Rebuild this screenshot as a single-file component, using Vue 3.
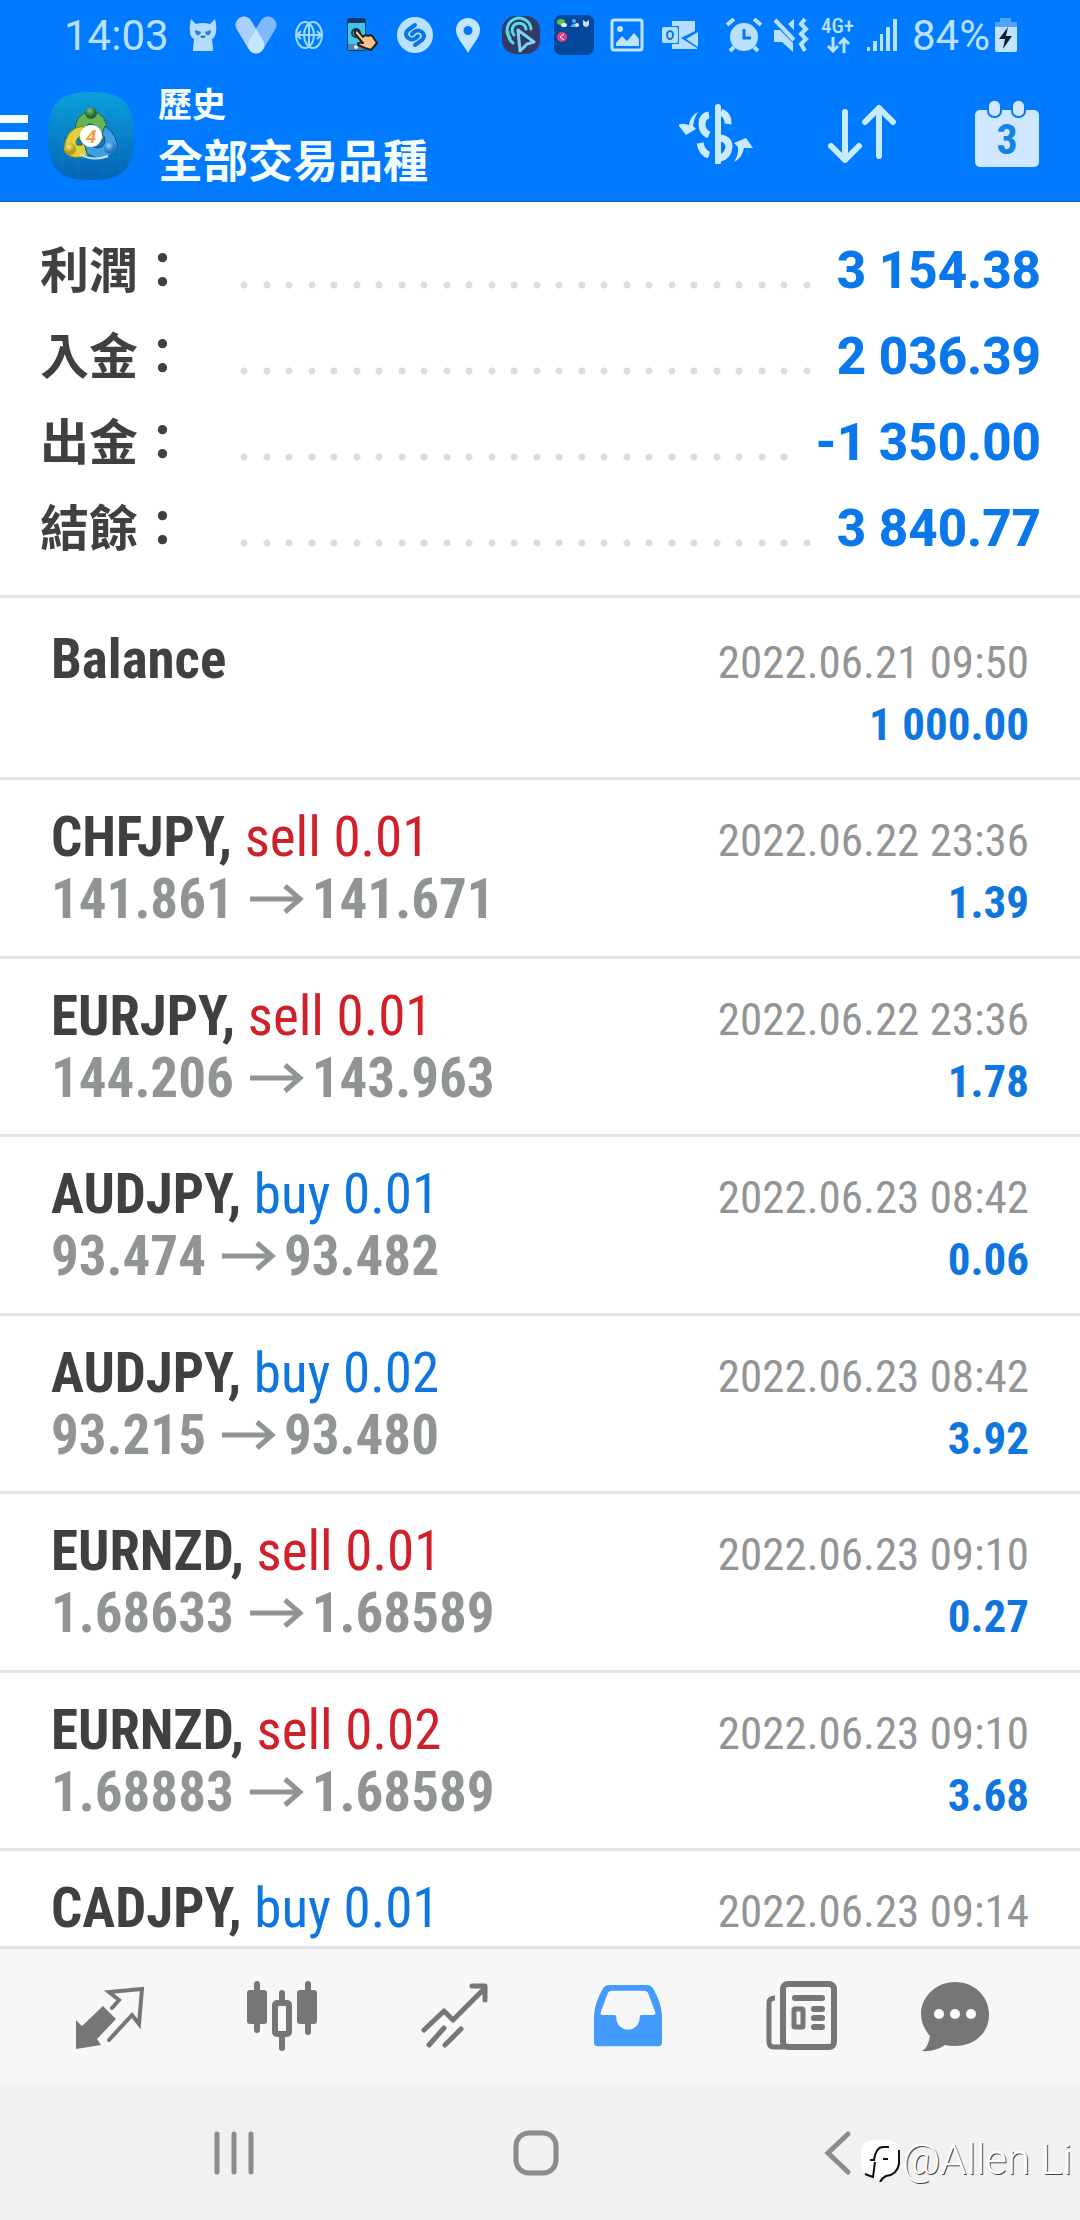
<script setup>
const totals = [
  { label: '利潤：', value: '3 154.38' },
  { label: '入金：', value: '2 036.39' },
  { label: '出金：', value: '-1 350.00' },
  { label: '結餘：', value: '3 840.77' },
]

const deals = [
  { symbol: 'Balance', time: '2022.06.21 09:50', profit: '1 000.00' },
  { symbol: 'CHFJPY,', side: 'sell', volume: '0.01', open: '141.861', close: '141.671', time: '2022.06.22 23:36', profit: '1.39' },
  { symbol: 'EURJPY,', side: 'sell', volume: '0.01', open: '144.206', close: '143.963', time: '2022.06.22 23:36', profit: '1.78' },
  { symbol: 'AUDJPY,', side: 'buy', volume: '0.01', open: '93.474', close: '93.482', time: '2022.06.23 08:42', profit: '0.06' },
  { symbol: 'AUDJPY,', side: 'buy', volume: '0.02', open: '93.215', close: '93.480', time: '2022.06.23 08:42', profit: '3.92' },
  { symbol: 'EURNZD,', side: 'sell', volume: '0.01', open: '1.68633', close: '1.68589', time: '2022.06.23 09:10', profit: '0.27' },
  { symbol: 'EURNZD,', side: 'sell', volume: '0.02', open: '1.68883', close: '1.68589', time: '2022.06.23 09:10', profit: '3.68' },
  { symbol: 'CADJPY,', side: 'buy', volume: '0.01', time: '2022.06.23 09:14' },
]
</script>

<template>
  <div class="screen">
    <div class="top">
      <div class="status">
        <span class="clock">14:03</span>
        <div class="notices">
          <span class="slot">
            <svg width="28" height="32" viewBox="0 0 28 32">
              <path d="M2 0L7 5Q14 3 21 5L26 0Q28 8 27 13Q26 19 23 20Q24 27 24 32H4Q4 27 5 20Q1 18 1 13Q0 8 2 0Z" fill="#b3dcff" />
              <path d="M6 11L12 13Q11 17 8 16Q6 15 6 11ZM22 11L16 13Q17 17 20 16Q22 15 22 11Z" fill="#2b7fd8" />
              <path d="M12 17Q14 19 16 17" stroke="#2b6cb0" stroke-width="2" fill="none" />
            </svg>
          </span>
          <span class="slot">
            <svg width="42" height="38" viewBox="0 0 42 38" fill="none" stroke-linecap="round" stroke-width="17">
              <path d="M9 9L21 29" stroke="#a9d0ff" />
              <path d="M33 9L21 29" stroke="#a9d0ff" stroke-opacity="0.75" />
              <path d="M21 13L28 25A8 8 0 1 1 14 25Z" fill="#c6e6ff" />
            </svg>
          </span>
          <span class="slot">
            <svg width="30" height="30" viewBox="0 0 30 30" fill="none" stroke="#9fdcff" stroke-width="2">
              <ellipse cx="11" cy="15" rx="9" ry="13" />
              <ellipse cx="19" cy="15" rx="9" ry="13" />
              <path d="M3 15H27M7 11L3 15L7 19M23 11L27 15L23 19M15 3V27" />
            </svg>
          </span>
          <span class="slot">
            <svg width="34" height="34" viewBox="0 0 34 34">
              <rect x="2" y="0" width="19" height="33" rx="3" fill="#123a63" />
              <rect x="3" y="5" width="17" height="21" fill="#45c4e8" />
              <rect x="3" y="26" width="17" height="6" fill="#4f86b0" />
              <circle cx="11" cy="29" r="2" fill="#e5f6ff" />
              <circle cx="11" cy="15" r="4" fill="none" stroke="#123a63" stroke-width="2" />
              <path d="M10 13Q12 11 14 14L18 19Q20 16 23 18Q26 16 28 19L32 25L26 32L20 30L13 27Q12 24 18 25L10 16Z" fill="#ffc18c" stroke="#222" stroke-width="2" stroke-linejoin="round" />
            </svg>
          </span>
          <span class="slot">
            <svg width="38" height="38" viewBox="0 0 38 38">
              <circle cx="19" cy="19" r="18" fill="#b9e2ff" />
              <path d="M19 9L12 14Q8 18 12 22Q16 25 20 22L22 20M19 29L26 24Q30 20 26 16Q22 13 18 16L16 18" fill="none" stroke="#0b74ea" stroke-width="4" stroke-linecap="round" />
            </svg>
          </span>
          <span class="slot">
            <svg width="26" height="36" viewBox="0 0 26 36">
              <path fill-rule="evenodd" d="M13 1A12 12 0 0 1 25 13C25 21 17 28 13 36C9 28 1 21 1 13A12 12 0 0 1 13 1ZM13 9A4 4 0 1 0 13 18A4 4 0 1 0 13 9Z" fill="#c3e6ff" />
            </svg>
          </span>
          <span class="slot">
            <svg width="40" height="40" viewBox="0 0 40 40" fill="none">
              <rect x="1" y="1" width="38" height="38" rx="14" fill="#323a66" />
              <path d="M9 23A12 12 0 1 1 30 14M12 28Q7 24 7 17M13 20A7 7 0 1 1 25 14" stroke="#58dbe6" stroke-width="3" stroke-linecap="round" />
              <path d="M17 15L33 27L26 29L19 36Z" fill="#323a66" stroke="#7fd3f5" stroke-width="3" stroke-linejoin="round" />
            </svg>
          </span>
          <span class="slot">
            <svg width="40" height="40" viewBox="0 0 40 40">
              <rect width="40" height="40" rx="7" fill="#03489b" />
              <ellipse cx="7" cy="7" rx="4" ry="3" fill="#4ccb4a" />
              <ellipse cx="10" cy="10" rx="3" ry="2" fill="#e8fbe8" />
              <circle cx="20" cy="6" r="2" fill="#57a9f5" />
              <path d="M16 12Q20 5 24 12Z" fill="#57a9f5" />
              <circle cx="23" cy="10" r="2" fill="#d7ecff" />
              <path d="M29 5L32 7L35 5V10Q32 14 29 10Z" fill="#c9dcf2" />
              <circle cx="8" cy="22" r="5" fill="#e0417c" />
              <path d="M10 19L6 22L10 25" stroke="#fff" stroke-width="1" fill="none" />
            </svg>
          </span>
          <span class="slot">
            <svg width="34" height="34" viewBox="0 0 34 34">
              <rect x="2" y="2" width="30" height="30" rx="2" fill="none" stroke="#bfe2ff" stroke-width="3" />
              <circle cx="10" cy="11" r="3" fill="#bfe2ff" />
              <path d="M6 28V25L12 18L17 23L24 15L29 21V28Z" fill="#bfe2ff" />
            </svg>
          </span>
          <span class="slot">
            <svg width="38" height="30" viewBox="0 0 38 30">
              <path d="M11 1H34V11L20 18L36 28V29H11V24H18V6H11ZM37 12V27L25 19Z" fill="#b7deff" />
              <rect x="1" y="7" width="16" height="16" rx="2" fill="#b7deff" />
              <ellipse cx="9" cy="15" rx="3" ry="4" fill="none" stroke="#0b74ea" stroke-width="2" />
            </svg>
          </span>
        </div>
        <div class="system">
          <span class="slot">
            <svg width="36" height="34" viewBox="0 0 36 34" fill="none">
              <circle cx="18" cy="19" r="14" fill="#b9e0ff" />
              <path d="M1 7L8 1M35 7L28 1M8 29L4 33M28 29L32 33" stroke="#b9e0ff" stroke-width="4" />
              <path d="M18 11V20H25" stroke="#0b74ea" stroke-width="3" />
            </svg>
          </span>
          <span class="slot">
            <svg width="36" height="34" viewBox="0 0 36 34" fill="none">
              <path d="M1 12H7L20 25V34L9 24H1ZM15 6L21 1V12Z" fill="#b9e0ff" />
              <path d="M2 2L21 22" stroke="#b9e0ff" stroke-width="4" />
              <path d="M32 1L28 6L33 11L28 16L33 21L28 26L32 33" stroke="#b9e0ff" stroke-width="4" />
            </svg>
          </span>
          <span class="slot network">
            <span>4G+</span>
            <svg width="24" height="16" viewBox="0 0 24 16" fill="none" stroke="#b9e0ff" stroke-width="3">
              <path d="M7 0V14M2 9L7 14L12 9M18 16V2M13 7L18 2L23 7" />
            </svg>
          </span>
          <span class="slot">
            <svg width="36" height="32" viewBox="0 0 36 32" fill="#b9e0ff">
              <rect x="0" y="28" width="3" height="4" />
              <rect x="6" y="22" width="4" height="10" />
              <rect x="13" y="15" width="3" height="17" />
              <rect x="19" y="8" width="4" height="24" />
              <rect x="26" y="0" width="4" height="32" />
            </svg>
          </span>
          <span class="battery">84%
            <svg width="24" height="34" viewBox="0 0 24 34">
              <path d="M6 0H17V4H23V9H1V4H6Z" fill="#4ea3ff" />
              <path d="M1 9H23V32Q23 34 21 34H3Q1 34 1 32Z" fill="#c3e4ff" />
              <path d="M14 9L5 21H11L9 31L18 18H12Z" fill="#10202e" />
            </svg>
          </span>
        </div>
      </div>

      <header class="appbar">
        <button class="menu" type="button" aria-label="Menu">
          <svg width="28" height="42" viewBox="0 0 28 42" fill="#f3fdff">
            <rect width="28" height="8" />
            <rect y="17" width="28" height="8" />
            <rect y="34" width="28" height="8" />
          </svg>
        </button>
        <svg class="logo" width="86" height="88" viewBox="0 0 86 88">
          <defs>
            <linearGradient id="tile" x1="0" y1="0" x2="0" y2="1">
              <stop offset="0" stop-color="#0aa0dc" />
              <stop offset="1" stop-color="#0563b5" />
            </linearGradient>
            <radialGradient id="green" cx="0.4" cy="0.3"><stop offset="0" stop-color="#7fc26f" /><stop offset="1" stop-color="#1f6b33" /></radialGradient>
            <radialGradient id="yellow" cx="0.4" cy="0.3"><stop offset="0" stop-color="#f5e878" /><stop offset="1" stop-color="#b39a14" /></radialGradient>
            <radialGradient id="azure" cx="0.4" cy="0.3"><stop offset="0" stop-color="#8fd2ff" /><stop offset="1" stop-color="#1f74c4" /></radialGradient>
          </defs>
          <path d="M43 0C76 0 86 12 86 44S76 88 43 88S0 76 0 44S10 0 43 0Z" fill="url(#tile)" />
          <path d="M14 8V80M30 1V87M56 1V87M72 8V80M3 22H83M1 44H85M3 66H83" stroke="#3fb8e8" stroke-opacity="0.15" />
          <path d="M27 42Q26 20 43 20T59 42L53 50Q50 34 43 32T33 50Z" fill="#67b35a" stroke="#245f2b" stroke-width="1" />
          <path d="M35 34Q17 36 16 58Q22 70 41 63L36 52Q28 56 28 50Q30 42 38 44Z" fill="#e3cf3c" stroke="#7d7a1b" stroke-width="1" />
          <path d="M57 34Q71 44 69 58Q56 72 39 62Q36 54 37 48Q44 58 54 55Q60 48 54 42Z" fill="#3f9fe0" stroke="#14508c" stroke-width="1" />
          <path d="M32 62Q44 70 60 64" stroke="#bfe4ff" stroke-width="2" fill="none" />
          <circle cx="43" cy="21" r="6" fill="url(#green)" />
          <circle cx="22" cy="57" r="6" fill="url(#yellow)" />
          <circle cx="62" cy="56" r="6" fill="url(#azure)" />
          <circle cx="43" cy="44" r="11" fill="#fff" />
          <text x="43" y="51" text-anchor="middle" font-family="Roboto, sans-serif" font-size="19" font-weight="700" font-style="italic" fill="#f39a45">4</text>
        </svg>
        <div class="titles">
          <span class="section">歷史</span>
          <h1>全部交易品種</h1>
        </div>
        <nav class="actions" aria-label="Tools">
          <button type="button" aria-label="Symbols">
            <svg width="76" height="60" viewBox="0 0 76 60" fill="none" stroke="#c9ebff" stroke-linecap="butt">
              <path d="M40 3V58" stroke-width="6" stroke-linecap="round" />
              <path d="M31 11Q24 12 24 20Q24 28 31 31M22 39Q24 49 31 51M43 8Q51 12 50 20M42 34Q51 35 51 43Q50 52 42 54" stroke-width="7" />
              <path d="M20 8Q12 12 11 21L7 20Q0 19 1 22L8 31L18 25L15 22Q16 14 20 8ZM56 58Q64 54 66 44L75 44L68 34L56 39L60 43Q61 50 56 58Z" fill="#c9ebff" stroke="none" />
            </svg>
          </button>
          <button type="button" aria-label="Sort">
            <svg width="72" height="60" viewBox="2 0 72 60" fill="none" stroke="#c9ebff" stroke-width="6" stroke-linecap="round" stroke-linejoin="round">
              <path d="M19 8V56M5 42L19 56L33 42M53 52V4M39 18L53 4L67 18" />
            </svg>
          </button>
          <button type="button" aria-label="Period">
            <svg width="66" height="68" viewBox="0 0 66 68">
              <rect x="1" y="10" width="64" height="57" rx="5" fill="#cfe8ff" />
              <rect x="14" y="0" width="13" height="17" rx="6" fill="#cfe8ff" stroke="#007aff" stroke-width="2" />
              <rect x="38" y="0" width="13" height="17" rx="6" fill="#cfe8ff" stroke="#007aff" stroke-width="2" />
              <text x="33" y="54" text-anchor="middle" font-family="'Roboto Condensed', Roboto, sans-serif" font-size="42" font-weight="700" fill="#1583e6">3</text>
            </svg>
          </button>
        </nav>
      </header>
    </div>

    <main>
      <dl class="totals">
        <div v-for="t in totals" :key="t.label" class="total">
          <dt>{{ t.label }}</dt>
          <span class="leader" aria-hidden="true"></span>
          <dd>{{ t.value }}</dd>
        </div>
      </dl>

      <ul class="deals">
        <li v-for="(d, i) in deals" :key="i" class="deal">
          <span class="symbol">{{ d.symbol }} <span v-if="d.side" :class="d.side">{{ d.side }} {{ d.volume }}</span></span>
          <span class="time">{{ d.time }}</span>
          <span class="prices">
            <template v-if="d.open">
              <span>{{ d.open }}</span>
              <svg class="arrow" width="54" height="30" viewBox="0 0 54 30" fill="none" stroke="#919495" stroke-width="5" role="img" aria-label="to">
                <path d="M0 15H50M35 2L50 15L35 28" />
              </svg>
              <span>{{ d.close }}</span>
            </template>
          </span>
          <span class="profit">{{ d.profit }}</span>
        </li>
      </ul>
    </main>

    <nav class="tabs" aria-label="Sections">
      <button type="button" aria-label="Quotes">
        <svg width="72" height="72" viewBox="0 0 72 72">
          <path d="M30 26L43 39L24 59L28 65L3 69V40L9 46Z" fill="#767676" />
          <path d="M39 28L46 20L36 12L69 9L66 44L59 35L36 60" fill="none" stroke="#767676" stroke-width="4" stroke-linecap="round" />
        </svg>
      </button>
      <button type="button" aria-label="Charts">
        <svg width="72" height="72" viewBox="0 0 72 72" fill="#767676">
          <rect x="8" y="1" width="6" height="52" rx="3" />
          <rect x="1" y="10" width="20" height="34" rx="3" />
          <rect x="59" y="1" width="6" height="54" rx="3" />
          <rect x="51" y="10" width="20" height="34" rx="3" />
          <rect x="33" y="10" width="6" height="14" rx="3" />
          <rect x="33" y="54" width="6" height="17" rx="3" />
          <rect x="29" y="23" width="14" height="31" rx="2" fill="none" stroke="#767676" stroke-width="6" />
        </svg>
      </button>
      <button type="button" aria-label="Trade">
        <svg width="72" height="72" viewBox="0 0 72 72" fill="none" stroke="#767676" stroke-width="5" stroke-linecap="round" stroke-linejoin="round">
          <path d="M5 50L25 31L34 40L66 8M53 6H66V20M25 48L10 65M42 49L26 65" />
        </svg>
      </button>
      <button type="button" aria-label="History" aria-current="page">
        <svg width="70" height="70" viewBox="0 0 72 72">
          <path fill-rule="evenodd" d="M17 4H56Q60 4 62 8Q70 22 71 35V63Q71 67 67 67H5Q1 67 1 63V35Q2 22 10 8Q12 4 17 4ZM20 10Q16 10 15 13L8 32Q7 35 10 35H22C24 35 24 37 24 38A12 12 0 0 0 48 38C48 37 48 35 50 35H61Q65 35 64 32L57 13Q56 10 52 10Z" fill="#449bff" />
        </svg>
      </button>
      <button type="button" aria-label="News">
        <svg width="72" height="72" viewBox="0 0 72 72" fill="none" stroke="#767676">
          <rect x="18" y="4" width="51" height="63" rx="5" stroke-width="6" />
          <path d="M10 18Q4 18 4 23V62Q4 67 9 67H20" stroke-width="5" />
          <path d="M30 18H57M49 29H57M49 38H57M49 47H57" stroke-width="6" stroke-linecap="round" />
          <rect x="29" y="29" width="9" height="18" rx="1" stroke-width="5" />
        </svg>
      </button>
      <button type="button" aria-label="Messages">
        <svg width="72" height="72" viewBox="0 0 72 72">
          <path d="M36 2C56 2 70 17 70 34C70 53 56 66 36 66Q30 66 26 65Q16 72 3 71Q9 68 11 56Q2 46 2 34C2 17 17 2 36 2Z" fill="#767676" />
          <circle cx="20" cy="34" r="5" fill="#fff" />
          <circle cx="36" cy="34" r="5" fill="#fff" />
          <circle cx="52" cy="34" r="5" fill="#fff" />
        </svg>
      </button>
    </nav>

    <nav class="system-nav" aria-label="System">
      <button type="button" aria-label="Recents">
        <svg width="46" height="46" viewBox="0 0 46 46" stroke="#8c8c8c" stroke-width="5" stroke-linecap="round">
          <path d="M6 4V42M23 4V42M40 4V42" />
        </svg>
      </button>
      <button type="button" aria-label="Home">
        <svg width="46" height="46" viewBox="0 0 46 46" fill="none" stroke="#8c8c8c" stroke-width="5">
          <rect x="3" y="3" width="40" height="40" rx="13" />
        </svg>
      </button>
      <button type="button" aria-label="Back">
        <svg width="46" height="46" viewBox="0 0 46 46" fill="none" stroke="#8c8c8c" stroke-width="5" stroke-linecap="round">
          <path d="M33 4L13 23L33 42" />
        </svg>
      </button>
      <div class="watermark">
        <svg width="40" height="44" viewBox="0 0 40 44">
          <path d="M13 2H28Q39 3 39 14V28Q38 38 27 39Q23 40 20 44Q17 39 12 39Q1 37 1 26V13Q2 3 13 2Z" fill="#fff" />
          <path d="M39 12V26Q37 37 26 38Q22 40 20 44M5 36Q10 38 13 39L15 24M10 22H14Q16 9 23 9H29M23 21H28" fill="none" stroke="#111" stroke-width="2" />
        </svg>
        <span>@Allen Li</span>
      </div>
    </nav>
  </div>
</template>

<style>
body {
  background: #fff;
}
</style>

<style scoped>
.screen {
  display: flex;
  flex-direction: column;
  height: 100vh;
  overflow: hidden;
  font-family: Roboto, "Noto Sans CJK TC", sans-serif;
  color: #404040;
}

svg {
  display: block;
  flex: none;
}

button {
  display: flex;
  align-items: center;
  justify-content: center;
  padding: 0;
  border: 0;
  background: none;
}

.top {
  flex: none;
  background: #007aff;
  border-bottom: 1px solid #1060c8;
}

.status {
  display: flex;
  align-items: center;
  height: 70px;
  padding: 0 62px 0 64px;
  color: #b9e0ff;
  font-size: 42px;
}

.clock {
  width: 112px;
}

.notices,
.system {
  display: flex;
  align-items: center;
}

.notices .slot {
  width: 53px;
}

.system {
  margin-left: auto;
}

.system .slot {
  width: 47px;
}

.slot {
  display: flex;
  align-items: center;
  justify-content: center;
}

.system .network {
  flex-direction: column;
  gap: 2px;
  font-family: "Roboto Condensed", Roboto, sans-serif;
  font-size: 21px;
  font-weight: 500;
  line-height: 18px;
}

.battery {
  display: flex;
  align-items: center;
  gap: 4px;
  margin-left: 4px;
}

.appbar {
  display: flex;
  align-items: center;
  height: 131px;
  padding-right: 40px;
  color: #f5feff;
}

.logo {
  margin: 0 24px 0 20px;
}

.titles {
  flex: 1;
  padding-bottom: 4px;
  font-family: "Noto Sans CJK TC", sans-serif;
  font-weight: 700;
}

.section {
  display: block;
  font-size: 34px;
  line-height: 50px;
}

h1 {
  margin: 0;
  font-size: 45px;
  font-weight: 700;
  line-height: 62px;
}

.actions {
  display: flex;
  align-items: center;
  gap: 74px;
  padding-bottom: 4px;
}

main {
  flex: 1;
  min-height: 0;
  overflow: hidden;
}

.totals {
  margin: 0;
  padding: 22px 39px 27px 40px;
  border-bottom: 3px solid #e3e3e3;
}

.total {
  display: flex;
  align-items: baseline;
  height: 86px;
  line-height: 86px;
}

dt {
  width: 193px;
  font-family: "Noto Sans CJK TC", sans-serif;
  font-size: 49px;
  font-weight: 700;
}

/* Two dots per tile */
.leader {
  flex: 1;
  align-self: center;
  height: 8px;
  margin: 36px 14px 0 0;
  background-image:
    radial-gradient(circle at 11px 4px, #dddddd 3px, transparent 4px),
    radial-gradient(circle at 34px 4px, #dddddd 3px, transparent 4px);
  background-size: 45px 8px;
  background-repeat: repeat-x;
}

dd {
  margin: 0;
  font-size: 51px;
  font-weight: 800;
  color: #0a78ea;
}

.deals {
  margin: 0;
  padding: 4px 0 0;
  list-style: none;
}

.deal {
  display: grid;
  grid-template-columns: 1fr auto;
  grid-auto-rows: 62px;
  align-items: baseline;
  padding: 26px 51px 25px;
  border-bottom: 3px solid #e3e3e3;
  font-family: "Roboto Condensed", Roboto, sans-serif;
  line-height: 62px;
  white-space: nowrap;
}

.deal:nth-child(even) {
  padding-bottom: 26px;
}

.symbol {
  font-size: 55px;
  font-weight: 700;
}

.symbol span {
  font-weight: 400;
}

.sell {
  color: #d0202a;
}

.buy,
.profit {
  color: #0f76e0;
}

.time {
  font-size: 45px;
  color: #929495;
}

.prices {
  display: flex;
  font-size: 55px;
  font-weight: 700;
  color: #919495;
}

/* Keeps a line box in rows that have no prices */
.prices::before {
  content: "\200b";
}

.arrow {
  align-self: center;
  margin: 0 8px 0 16px;
}

.profit {
  font-size: 45px;
  font-weight: 700;
  text-align: right;
}

.tabs {
  display: flex;
  flex: none;
  box-sizing: border-box;
  height: 139px;
  padding: 0 57px 3px 22px;
  border-top: 3px solid #e0e0e0;
  background: #f7f7f7;
}

.tabs button {
  flex: 173 1 0;
}

.tabs button:last-child {
  flex-grow: 136;
}

.system-nav {
  position: relative;
  display: flex;
  flex: none;
  height: 135px;
  padding: 0 91px 0 83px;
  background: #f1f1f1;
}

.system-nav button {
  flex: 1;
}

.watermark {
  position: absolute;
  right: 8px;
  bottom: 36px;
  display: flex;
  align-items: center;
  gap: 2px;
  color: #fff;
  font-size: 42px;
  font-weight: 300;
  text-shadow: 1px 1px 0 #444;
}
</style>
